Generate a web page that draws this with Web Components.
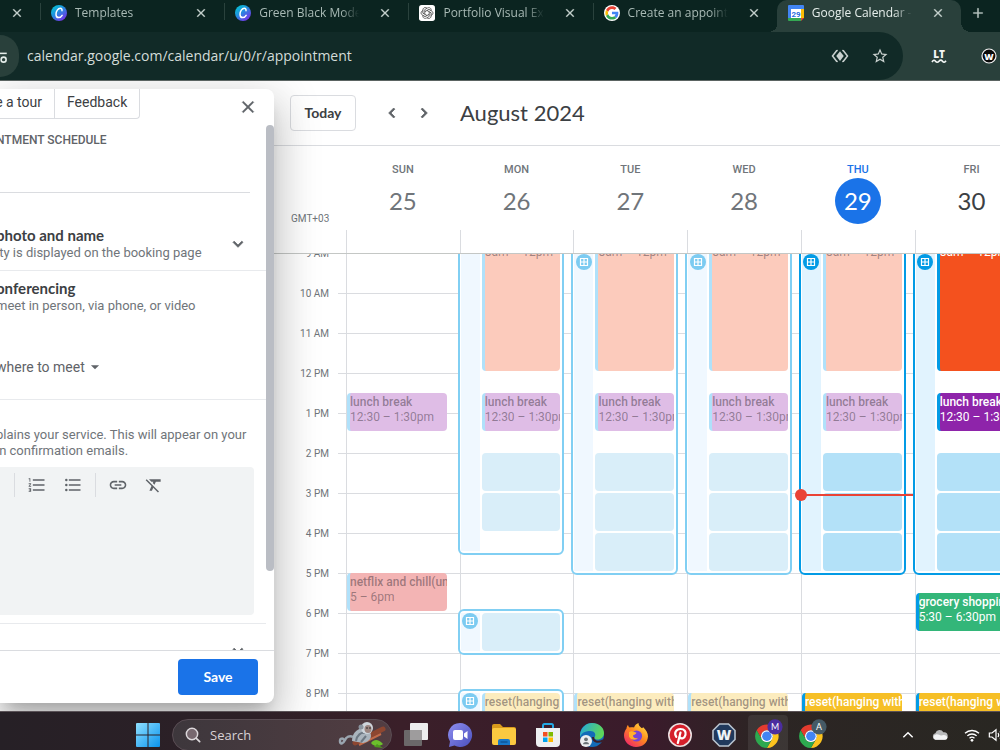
<!DOCTYPE html>
<html lang="en">
<head>
<meta charset="utf-8">
<meta name="viewport" content="width=device-width, initial-scale=1">
<title>Google Calendar - August 2024</title>
<style>
  html, body {
    height: 100%;
    margin: 0;
  }
  body {
    font-family: Roboto, "Liberation Sans", sans-serif;
    overflow: hidden;
    --google: Lato, "Open Sans", sans-serif;
    --system: "Open Sans", "Noto Sans", sans-serif;
    --line: #dadce0;
    --muted: #70757a;
    --ink: #3c4043;
  }
</style>
</head>
<body>
<desktop-screen>
  <browser-tabs slot="browser"></browser-tabs>
  <address-bar slot="browser"></address-bar>
  <booking-panel slot="page"></booking-panel>
  <calendar-view slot="page"></calendar-view>
  <task-bar slot="taskbar"></task-bar>
</desktop-screen>

<script>
// shared svg artwork, used by <svg-icon name="...">
const chromeArt = `
  <g transform="translate(0 4) scale(.92)">
    <path fill="#e33b2e" d="M24 13H43.05A22 22 0 0 0 4.950 13L14.470 29.500A11 11 0 0 1 24 13Z"/>
    <path fill="#fcc31e" transform="rotate(120 24 24)" d="M24 13H43.05A22 22 0 0 0 4.950 13L14.470 29.500A11 11 0 0 1 24 13Z"/>
    <path fill="#2da94f" transform="rotate(240 24 24)" d="M24 13H43.05A22 22 0 0 0 4.950 13L14.470 29.500A11 11 0 0 1 24 13Z"/>
    <circle cx="24" cy="24" r="11" fill="#fff"/>
    <circle cx="24" cy="24" r="8.800" fill="#4285f4"/>
  </g>`;

const canvaArt = `
  <defs><linearGradient id="g" x1="0" y1="0" x2=".8" y2="1">
    <stop offset="0" stop-color="#00d0cf"/><stop offset=".45" stop-color="#1f93e0"/><stop offset="1" stop-color="#7d2ae8"/>
  </linearGradient></defs>
  <circle cx="12" cy="12" r="12" fill="url(#g)"/>
  <path d="M16.500 8.500c.4-2.200-.8-3.500-2.400-3.500-3.600 0-6.600 4.500-6.600 8.700 0 3.200 1.600 5.200 4 5.200 2 0 3.900-1.300 5.200-3.500" fill="none" stroke="#fff" stroke-width="2.200" stroke-linecap="round"/>`;

const ICONS = {
  close: ["0 0 24 24", `<path d="M19 6.410L17.590 5 12 10.590 6.410 5 5 6.410 10.590 12 5 17.590 6.410 19 12 13.410 17.590 19 19 17.590 13.410 12z" stroke="currentColor" stroke-width=".5"/>`],
  plus: ["0 0 24 24", `<path d="M13 4h-2v7H4v2h7v7h2v-7h7v-2h-7z" stroke="currentColor" stroke-width=".5"/>`],
  left: ["0 0 24 24", `<path d="M15.410 7.410L14 6l-6 6 6 6 1.410-1.410L10.830 12z" stroke="currentColor" stroke-width=".9"/>`],
  right: ["0 0 24 24", `<path d="M10 6L8.590 7.410 13.170 12l-4.580 4.590L10 18l6-6z" stroke="currentColor" stroke-width=".9"/>`],
  down: ["0 0 24 24", `<path d="M7.410 8.590L12 13.170l4.590-4.580L18 10l-6 6-6-6z" stroke="currentColor" stroke-width=".9"/>`],
  up: ["0 0 24 24", `<path d="M4 16l8-8 8 8" fill="none" stroke="currentColor" stroke-width="2.400"/>`],
  caret: ["0 0 24 24", `<path d="M5 9h14l-7 7z"/>`],
  numbered: ["0 0 24 24", `<path d="M2 17h2v.5H3v1h1v.5H2v1h3v-4H2v1zm1-9h1V4H2v1h1v3zm-1 3h1.800L2 13.100v.9h3v-1H3.200L5 10.900V10H2v1zm5-6v2h14V5H7zm0 14h14v-2H7v2zm0-6h14v-2H7v2z"/>`],
  bulleted: ["0 0 24 24", `<circle cx="4" cy="6" r="1.500"/><circle cx="4" cy="12" r="1.500"/><circle cx="4" cy="18" r="1.500"/><path d="M7 19h14v-2H7v2zm0-6h14v-2H7v2zm0-8v2h14V5H7z"/>`],
  link: ["0 0 24 24", `<path d="M3.900 12c0-1.710 1.390-3.100 3.100-3.100h4V7H7c-2.760 0-5 2.240-5 5s2.240 5 5 5h4v-1.900H7c-1.710 0-3.100-1.390-3.100-3.100zM8 13h8v-2H8v2zm9-6h-4v1.900h4c1.710 0 3.100 1.390 3.100 3.100s-1.390 3.100-3.100 3.100h-4V17h4c2.760 0 5-2.240 5-5s-2.240-5-5-5z"/>`],
  clear: ["0 0 24 24", `<path d="M3.270 5L2 6.270l6.970 6.970L6.500 19h3l1.570-3.660L16.730 21 18 19.730 3.550 5.270 3.270 5zM6 5v.18L8.820 8h2.400l-.72 1.680 2.100 2.100L14.210 8H20V5H6z"/>`],
  slots: ["0 0 16 16", `<circle cx="8" cy="8" r="8"/><path d="M4.500 4.500h7v7h-7zM8 4.500v7M4.500 8h7" fill="none" stroke="#fff" stroke-width="1.200"/>`],
  star: ["0 0 24 24", `<path d="M22 9.240l-7.190-.62L12 2 9.190 8.630 2 9.240l5.460 4.730L5.820 21 12 17.270 18.180 21l-1.630-7.030L22 9.240zM12 15.400l-3.760 2.270 1-4.280-3.320-2.880 4.380-.38L12 6.100l1.710 4.040 4.380.38-3.320 2.880 1 4.280L12 15.400z"/>`],
  tune: ["0 0 24 24", `<path d="M2 7h20" stroke="currentColor" stroke-width="2.500"/><circle cx="17" cy="17" r="4" fill="none" stroke="currentColor" stroke-width="2.500"/>`],
  lens: ["0 0 24 24", `<path d="M12 5.500l5 6.500-5 6.500L7 12z"/><path d="M9 4.500L7.500 5 2 12l5.500 7 1.500.5M15 4.500l1.500.5L22 12l-5.500 7-1.500.5" fill="none" stroke="currentColor" stroke-width="2"/>`],
  language: ["0 0 16 16", `<text x="8" y="9.500" font-family="Open Sans" font-size="10" font-weight="800" text-anchor="middle">LT</text><path d="M1 14q1.800-3 3.500-.8t3.500 0 3.500 0 3.500-.4" fill="none" stroke="currentColor" stroke-width="1.600"/>`],
  wappalyzer: ["0 0 16 16", `<circle cx="8" cy="8" r="7" fill="#0b0b0b" stroke="#f2f2f2" stroke-width="1.200"/><text x="8" y="11.500" fill="#fff" font-family="Open Sans" font-size="9" font-weight="800" text-anchor="middle">W</text>`],
  canva: ["0 0 24 24", canvaArt],
  openai: ["0 0 24 24", `<rect width="24" height="24" rx="4" fill="#fff"/><g transform="translate(-1.200 -1.200) scale(1.100)" fill="none" stroke="#4a4a4a" stroke-width="1.100">${[0, 60, 120, 180, 240, 300].map(a => `<path transform="rotate(${a} 12 12)" d="M9 13.700V7.300l3.800-2.200c2.900-1.500 5.600 1 4.700 3.700"/>`).join("")}</g>`],
  google: ["0 0 48 48", `<circle cx="24" cy="24" r="24" fill="#fff"/><g transform="translate(4 4) scale(.83)">
    <path fill="#ea4335" d="M24 9.500c3.540 0 6.710 1.220 9.210 3.600l6.850-6.850C35.900 2.380 30.470 0 24 0 14.620 0 6.510 5.380 2.560 13.220l7.980 6.190C12.430 13.720 17.740 9.500 24 9.500z"/>
    <path fill="#4285f4" d="M46.980 24.550c0-1.570-.15-3.090-.38-4.550H24v9.020h12.940c-.58 2.960-2.260 5.480-4.780 7.180l7.730 6c4.510-4.180 7.090-10.360 7.090-17.650z"/>
    <path fill="#fbbc05" d="M10.530 28.590c-.48-1.450-.76-2.990-.76-4.590s.27-3.140.76-4.590l-7.980-6.190C.92 16.460 0 20.120 0 24c0 3.880.92 7.540 2.560 10.780l7.970-6.190z"/>
    <path fill="#34a853" d="M24 48c6.480 0 11.930-2.130 15.890-5.810l-7.730-6c-2.150 1.450-4.920 2.300-8.160 2.300-6.260 0-11.570-4.220-13.470-9.910l-7.980 6.190C6.510 42.620 14.620 48 24 48z"/></g>`],
  calendar: ["0 0 16 16", `<path d="M1 0h14a1 1 0 0 1 1 1v3H0V1a1 1 0 0 1 1-1z" fill="#4285f4"/><path d="M0 3h3v10H0z" fill="#4285f4"/><path d="M13 4h3v9h-3z" fill="#fbbc04"/><path d="M0 13h13v3H1a1 1 0 0 1-1-1z" fill="#34a853"/><path d="M13 16v-3h3z" fill="#ea4335"/><path d="M3 4h10v9H3z" fill="#fff"/><text x="8" y="11.500" fill="#2a6fe0" font-family="Roboto" font-size="8" font-weight="700" text-anchor="middle">29</text>`],
  windows: ["0 0 24 24", `<defs><linearGradient id="g" x1="0" y1="0" x2="1" y2="1"><stop offset="0" stop-color="#8fe0ff"/><stop offset="1" stop-color="#0a93ee"/></linearGradient></defs><path fill="url(#g)" d="M0 1a1 1 0 0 1 1-1h10.500v11.500H0zM12.500 0H23a1 1 0 0 1 1 1v10.500H12.500zM0 12.500h11.500V24H1a1 1 0 0 1-1-1zM12.500 12.500H24V23a1 1 0 0 1-1 1H12.500z"/>`],
  search: ["0 0 24 24", `<circle cx="10.500" cy="10.500" r="8.500" fill="#77686f" stroke="#dcd8db" stroke-width="2.200"/><path d="M17 17l5 5" stroke="#dcd8db" stroke-width="2.600" stroke-linecap="round"/>`],
  marmoset: ["0 0 48 28", `
    <path d="M16 22L44 8" stroke="#8d4630" stroke-width="5" stroke-linecap="round"/><path d="M20 24l22-11" stroke="#c26a48" stroke-width="2"/>
    <path d="M14 16c-3-2-7 0-8 3-2 4-5 5-5 1 0-3 3-3 4-1" fill="none" stroke="#9aa5af" stroke-width="2.500"/>
    <path d="M13 20c0-7 4-12 11-13 5 0 8 4 8 8 0 3-3 6-8 7z" fill="#aab4bd"/>
    <path d="M17 20c1-6 5-9 9-8M22 21l5-6" fill="none" stroke="#6d7883" stroke-width="2"/>
    <circle cx="28" cy="7" r="6" fill="#cfd6dc"/><circle cx="22" cy="6" r="2.500" fill="#8a949e"/><ellipse cx="29" cy="8" rx="3.500" ry="4" fill="#9b8580"/>
    <circle cx="28" cy="7" r=".8" fill="#1c1c1c"/><circle cx="31" cy="7" r=".8" fill="#1c1c1c"/>
    <path d="M32 22c4-5 8-3 12 1-4 3-9 3-12-1z" fill="#6cbf2c"/><path d="M38 23l6 4-9-1z" fill="#4c9a1c"/>`],
  taskview: ["0 0 24 24", `<rect x="6" y="0" width="18" height="17" rx="1" fill="#ededee"/><rect x="0" y="7" width="18" height="16" rx="1" fill="#6b6869"/><path d="M6 7h12v10H6z" fill="#9e9c9d"/>`],
  chat: ["0 0 24 24", `<defs><linearGradient id="g" x1="0" y1="0" x2="1" y2="1"><stop offset="0" stop-color="#8f8ff0"/><stop offset="1" stop-color="#4a4fbd"/></linearGradient></defs><path fill="url(#g)" d="M12 0a12 12 0 1 1-5.500 22.600L1 24l1-5.500A12 12 0 0 1 12 0z"/><rect x="5" y="7" width="10" height="10" rx="2" fill="#fff"/><path d="M16 10.500l3.500-2.500v8L16 13.500z" fill="#fff"/>`],
  folder: ["0 0 24 24", `<path d="M0 3a2 2 0 0 1 2-2h6l3 3h11a2 2 0 0 1 2 2v4H0z" fill="#d99a1c"/><rect x="0" y="5" width="24" height="17" rx="2" fill="#fbc940"/><path d="M6 22v-4a2 2 0 0 1 2-2h8a2 2 0 0 1 2 2v4z" fill="#1877c9"/><path d="M8.500 19h7" stroke="#0e5599" stroke-width="1.500"/>`],
  store: ["0 0 24 24", `<path d="M7 6V2.500A1.500 1.500 0 0 1 8.500 1h7A1.500 1.500 0 0 1 17 2.500V6" fill="none" stroke="#23a8e4" stroke-width="2"/><path d="M0 5h24v15a4 4 0 0 1-4 4H4a4 4 0 0 1-4-4z" fill="#eef0f2"/><path d="M7 9h4.500v4.500H7z" fill="#f25022"/><path d="M12.500 9H17v4.500h-4.500z" fill="#7fba00"/><path d="M7 14.500h4.500V19H7z" fill="#00a4ef"/><path d="M12.500 14.500H17V19h-4.500z" fill="#ffb900"/>`],
  edge: ["0 0 24 24", `<defs><linearGradient id="g" x1="0" y1="0" x2="1" y2=".3"><stop offset="0" stop-color="#23a7e0"/><stop offset="1" stop-color="#5ed65a"/></linearGradient></defs>
    <circle cx="12" cy="12" r="12" fill="#136bb8"/><path d="M0 11.500C1 4.500 6 0 12 0c7 0 12 4.500 12 10 0 4-3 6.500-6.500 6.500-3 0-3.500-1.300-2.800-2.500 1.600-2.700 0-6-4.200-6C6 8 1.500 9.500 0 14z" fill="url(#g)"/><path d="M13 14c0 5 5 6 10 3.500L24 19" fill="none" stroke="#3a1f2b" stroke-width="2"/>
    <circle cx="6" cy="18" r="6" fill="#eceef0"/><circle cx="6" cy="16.300" r="1.900" fill="#6a7075"/><path d="M3 21.300c0-3 6-3 6 0z" fill="#6a7075"/>`],
  firefox: ["0 0 24 24", `<defs><linearGradient id="g" x1="1" y1="0" x2=".2" y2="1"><stop offset="0" stop-color="#fff14c"/><stop offset=".5" stop-color="#ff8a1e"/><stop offset="1" stop-color="#f0246a"/></linearGradient></defs>
    <path fill="url(#g)" d="M2.500 5.500c0-1.500.8-3 1.500-3.500.2 1 .8 2 1.500 2.600C7.500 4 9 4 10 4.500 11 2 12.500.8 14.500 0c0 2 1 3.500 3 5 1 .5 1.500-.5 1.500-1 3 3 5 6 5 9.500C23.500 20 18.500 24 12 24S0 19 0 12.500c0-3 1-5 2.500-7z"/>
    <circle cx="12.500" cy="13" r="5.600" fill="#7443d6"/><path d="M5 9c3-1.500 5 0 7.500.8-.4 1.800-2.500 1.800-3.500 2.800 0 2.500 3 3.500 5 2.200-1 2.700-7 3-9-1.300z" fill="#ffb02a"/>`],
  pinterest: ["0 0 24 24", `<circle cx="12" cy="12" r="11.200" fill="#d51f2b" stroke="#eadfe0" stroke-width="1.600"/><path d="M8.300 13.800c-2.600-3.600-.3-7.800 4.200-7.800 4 0 5.700 2.800 5 5.800-.8 3.500-4.300 4.700-5.700 2.300M12.500 9.500L9.800 20" fill="none" stroke="#fff" stroke-width="2.200" stroke-linecap="round"/>`],
  webwork: ["0 0 24 24", `<path d="M7.500 1h9L23 7.500v9L16.500 23h-9L1 16.500v-9z" fill="#21395c" stroke="#b9c4cf" stroke-width="1.600"/><text x="12" y="17" fill="#eef2f6" font-family="Open Sans" font-size="14" font-weight="800" text-anchor="middle">W</text>`],
  chromeM: ["0 0 48 48", `${chromeArt}<circle cx="36" cy="10" r="13" fill="#4b2d9f"/><text x="36" y="15" fill="#fff" font-family="Lato" font-size="15" text-anchor="middle">M</text>`],
  chromeA: ["0 0 48 48", `${chromeArt}<circle cx="36" cy="10" r="13" fill="#455a66"/><text x="36" y="15" fill="#fff" font-family="Lato" font-size="15" text-anchor="middle">A</text>`],
  cloud: ["0 0 24 24", `<path d="M6 19a5 5 0 0 1-1-9.800A6.500 6.500 0 0 1 17 8a5.500 5.500 0 0 1 2 11z" fill="#b9babb"/><path d="M5 19a4 4 0 0 1 1-7.800c3-1 6 2 8 1.500 4-2 9 0 9 3.300A3.200 3.200 0 0 1 20 19z" fill="#f3f4f5"/>`],
  wifi: ["0 0 24 24", `<g fill="none" stroke="currentColor" stroke-width="2"><path d="M1.500 9.500a15 15 0 0 1 21 0M5 13.300a10 10 0 0 1 14 0M8.300 16.800a5.500 5.500 0 0 1 7.400 0"/></g><circle cx="12" cy="20" r="2"/>`],
  volume: ["0 0 24 24", `<g fill="none" stroke="currentColor" stroke-width="1.800"><path d="M2 9h4l6-5v16l-6-5H2zM15 9q2 3 0 6M18 6.500q4 5.500 0 11"/></g>`]
};

class SvgIcon extends HTMLElement {
  connectedCallback() {
    if (this.shadowRoot) return;
    const [box, art] = ICONS[this.getAttribute("name")];
    this.attachShadow({ mode: "open" }).innerHTML = `
      <style>
        :host { display: inline-block; flex: none; width: var(--size, 20px); height: var(--size, 20px); }
        svg { display: block; width: 100%; height: 100%; overflow: visible; fill: currentColor; }
      </style>
      <svg viewBox="${box}" aria-hidden="true">${art}</svg>`;
  }
}
customElements.define("svg-icon", SvgIcon);

// every other element only needs its markup stamped once
function define(name, html) {
  const template = document.createElement("template");
  template.innerHTML = html;
  customElements.define(name, class extends HTMLElement {
    constructor() {
      super();
      this.attachShadow({ mode: "open" });
      this.shadowRoot.appendChild(template.content.cloneNode(true));
    }
  });
}

define("desktop-screen", `
<style>
  :host { display: flex; flex-direction: column; height: 100vh; background: #fff; }
  main { flex: 1; min-height: 0; display: flex; overflow: hidden; }
</style>
<slot name="browser"></slot>
<main><slot name="page"></slot></main>
<slot name="taskbar"></slot>
`);

define("browser-tab", `
<style>
  :host {
    display: flex;
    flex: 1;
    min-width: 0;
    box-sizing: border-box;
    height: 32px;
    padding: 4px 15px 10px 10px;
    align-items: center;
    gap: 8px;
    color: #a9bab5;
    font: 12px/18px var(--system);
    border-left: 1px solid transparent;
    border-image: linear-gradient(transparent 4px, #2a423d 4px, #2a423d 20px, transparent 20px) 1;
    --size: 16px;
  }
  :host([active]) {
    position: relative;
    background: #29403b;
    color: #e6eeeb;
    border-image: none;
    border-radius: 10px 10px 0 0;
  }
  /* feet of the selected tab */
  :host([active])::before, :host([active])::after {
    content: "";
    position: absolute;
    bottom: 0;
    width: 10px;
    height: 10px;
  }
  :host([active])::before { right: 100%; background: radial-gradient(circle at 0 0, transparent 10px, #29403b 10px); }
  :host([active])::after { left: 100%; background: radial-gradient(circle at 100% 0, transparent 10px, #29403b 10px); }
  span {
    flex: 1;
    min-width: 0;
    margin-right: 10px;
    overflow: hidden;
    white-space: nowrap;
    -webkit-mask-image: linear-gradient(90deg, #000 82%, transparent);
    mask-image: linear-gradient(90deg, #000 82%, transparent);
  }
  button { display: flex; padding: 0; border: 0; background: none; color: #c9d5d1; --size: 14px; width: 16px; justify-content: center; }
</style>
<slot name="icon"></slot>
<span><slot></slot></span>
<button aria-label="Close tab"><svg-icon name="close"></svg-icon></button>
`);

define("browser-tabs", `
<style>
  :host { display: flex; height: 32px; flex: none; background: #0b2420; }
  button {
    display: flex;
    flex: none;
    align-items: center;
    justify-content: center;
    box-sizing: border-box;
    height: 26px;
    padding: 0;
    border: 0;
    background: none;
    color: #c9d5d1;
  }
  .cut { width: 40px; padding-right: 6px; --size: 14px; }
  .new { width: 39px; padding-right: 6px; --size: 14px; }
</style>
<button class="cut" aria-label="Close tab"><svg-icon name="close"></svg-icon></button>
<browser-tab><svg-icon slot="icon" name="canva"></svg-icon>Templates</browser-tab>
<browser-tab><svg-icon slot="icon" name="canva"></svg-icon>Green Black Modern</browser-tab>
<browser-tab><svg-icon slot="icon" name="openai"></svg-icon>Portfolio Visual Expl</browser-tab>
<browser-tab><svg-icon slot="icon" name="google"></svg-icon>Create an appointment</browser-tab>
<browser-tab active><svg-icon slot="icon" name="calendar"></svg-icon>Google Calendar -</browser-tab>
<button class="new" aria-label="New tab"><svg-icon name="plus"></svg-icon></button>
`);

define("address-bar", `
<style>
  :host { display: flex; flex: none; height: 48px; background: #29403b; border-bottom: 1px solid #5b6462; overflow: hidden; }
  .field { flex: 1; display: flex; align-items: center; background: #112a27; border-radius: 0 24px 24px 0; padding-right: 3px; }
  button { display: flex; flex: none; align-items: center; justify-content: center; width: 40px; height: 40px; padding: 0; border: 0; background: none; color: #c9d1cf; --size: 18px; }
  .site { width: 19px; height: 42px; justify-content: flex-end; padding-right: 11px; background: #29403b; border-radius: 0 21px 21px 0; color: #e6eeeb; --size: 15px; }
  input { flex: 1; min-width: 0; margin: 0; padding: 0 8px; border: 0; outline: 0; background: none; color: #d3dcd9; font: 14px/20px var(--system); }
  nav { flex: none; display: flex; width: 97px; align-items: center; padding-left: 16px; box-sizing: border-box; gap: 10px; }
  nav button { color: #f3f6f5; --size: 16px; }
</style>
<div class="field">
  <button class="site" aria-label="Site information"><svg-icon name="tune"></svg-icon></button>
  <input type="text" aria-label="Address" value="calendar.google.com/calendar/u/0/r/appointment">
  <button aria-label="Lens"><svg-icon name="lens"></svg-icon></button>
  <button aria-label="Bookmark"><svg-icon name="star"></svg-icon></button>
</div>
<nav>
  <button aria-label="LanguageTool"><svg-icon name="language"></svg-icon></button>
  <button aria-label="Extension"><svg-icon name="wappalyzer"></svg-icon></button>
</nav>
`);

define("panel-section", `
<style>
  :host { display: flex; align-items: center; padding: 8px 18px 8px 0; border-bottom: 1px solid #e8eaed; }
  div { flex: 1; min-width: 0; }
  h3 { margin: 0; font: 700 15px/18px var(--google); color: var(--ink); white-space: nowrap; }
  p { margin: 0; font-size: 13px; line-height: 18px; color: var(--muted); white-space: nowrap; }
</style>
<div>
  <h3><slot name="title"></slot></h3>
  <p><slot name="hint"></slot></p>
  <slot></slot>
</div>
<slot name="action"></slot>
`);

define("booking-panel", `
<style>
  :host {
    position: relative;
    z-index: 2;
    display: flex;
    flex-direction: column;
    flex: none;
    width: 274px;
    margin: 8px 0;
    background: #fff;
    border-radius: 0 8px 8px 0;
    box-shadow: 0 24px 38px 3px rgba(0,0,0,.14), 0 9px 46px 8px rgba(0,0,0,.12), 0 11px 15px -7px rgba(0,0,0,.2);
    color: var(--muted);
  }
  button { font: inherit; color: #5f6368; background: none; border: 0; padding: 0; }
  .icon { display: flex; align-items: center; justify-content: center; width: 36px; height: 36px; }
  header { display: flex; height: 36px; justify-content: space-between; padding-right: 8px; }
  .links { display: flex; height: 30px; box-sizing: border-box; border: 1px solid var(--line); border-width: 0 1px 1px 0; border-radius: 0 0 4px 0; }
  .links button { padding: 0 12px 4px; font-size: 14px; color: var(--ink); white-space: nowrap; }
  .links button:first-child { padding-left: 0; width: 55px; box-sizing: border-box; border-right: 1px solid var(--line); text-align: right; display: flex; justify-content: flex-end; align-items: center; }
  .scroll { flex: 1; min-height: 0; display: flex; overflow: hidden; }
  .content { flex: 1; min-width: 0; margin-left: -4px; }
  .thumb { flex: none; width: 8px; height: 85%; border-radius: 4px; background: #babdc4; }
  .heading { display: block; padding-top: 7px; font-size: 12px; line-height: 16px; font-weight: 500; color: #5f6368; }
  .name { display: block; box-sizing: border-box; width: calc(100% - 16px); height: 45px; padding: 0; border: 0; border-bottom: 1px solid var(--line); background: none; outline: 0; }
  .photo { padding-top: 33px; }
  .photo .icon { width: 20px; }
  .where { display: flex; align-items: center; height: 48px; padding-top: 28px; }
  select { appearance: none; border: 0; padding: 0; margin: 0 3px 0 0; background: none; font: 14px/20px Roboto, sans-serif; color: #5f6368; outline: 0; }
  .where svg-icon { --size: 14px; color: #5f6368; }
  .about { padding: 27px 12px 8px 0; border-bottom: 1px solid #e8eaed; }
  .about label { display: block; font-size: 13px; line-height: 16px; margin-bottom: 8px; white-space: nowrap; }
  .editor { height: 148px; display: flex; flex-direction: column; background: #f1f3f4; border-radius: 4px; }
  .tools { display: flex; align-items: center; height: 36px; padding-left: 18px; }
  .tools button { display: flex; justify-content: center; width: 36px; }
  .tools i { width: 1px; height: 24px; margin-right: 4px; background: var(--line); }
  .tools button + i { margin: 0 4px; }
  textarea { flex: 1; border: 0; padding: 8px; margin: 0; background: none; resize: none; outline: 0; font: 14px/20px Roboto, sans-serif; }
  .more { display: flex; justify-content: flex-end; padding: 9px 18px 0 0; }
  .more .icon { width: 20px; }
  footer { display: flex; justify-content: flex-end; padding: 8px 16px; border-top: 1px solid var(--line); }
  .save { width: 80px; height: 36px; border-radius: 4px; background: #1a73e8; color: #fff; font: 700 14px/20px var(--google); }
</style>
<header>
  <div class="links">
    <button>e a tour</button>
    <button>Feedback</button>
  </div>
  <button class="icon" aria-label="Close"><svg-icon name="close"></svg-icon></button>
</header>
<div class="scroll">
  <div class="content">
    <label class="heading" for="name">NTMENT SCHEDULE</label>
    <input class="name" id="name" type="text">
    <panel-section class="photo">
      <span slot="title">photo and name</span>
      <span slot="hint">ity is displayed on the booking page</span>
      <button class="icon" slot="action" aria-label="Expand"><svg-icon name="down"></svg-icon></button>
    </panel-section>
    <panel-section>
      <span slot="title">onferencing</span>
      <span slot="hint">meet in person, via phone, or video</span>
      <div class="where">
        <select aria-label="Location"><option>where to meet</option></select>
        <svg-icon name="caret"></svg-icon>
      </div>
    </panel-section>
    <div class="about">
      <label for="about">plains your service. This will appear on your<br>in confirmation emails.</label>
      <div class="editor">
        <div class="tools">
          <i></i>
          <button aria-label="Numbered list"><svg-icon name="numbered"></svg-icon></button>
          <button aria-label="Bulleted list"><svg-icon name="bulleted"></svg-icon></button>
          <i></i>
          <button aria-label="Insert link"><svg-icon name="link"></svg-icon></button>
          <button aria-label="Remove formatting"><svg-icon name="clear"></svg-icon></button>
        </div>
        <textarea id="about"></textarea>
      </div>
    </div>
    <div class="more"><button class="icon" aria-label="Expand"><svg-icon name="down"></svg-icon></button></div>
  </div>
  <div class="thumb"></div>
</div>
<footer><button class="save">Save</button></footer>
`);

define("day-heading", `
<style>
  :host { display: flex; flex-direction: column; align-items: center; height: 107px; box-sizing: border-box; padding-top: 15px; color: var(--muted); }
  .day { font-size: 11px; line-height: 17px; font-weight: 500; }
  .date { display: flex; align-items: center; justify-content: center; width: 46px; height: 46px; border-radius: 50%; font: 24px/46px var(--google); }
  .tick { align-self: stretch; height: 23px; margin-top: auto; border-left: 1px solid var(--line); }
  :host([today]) .day { color: #1a73e8; }
  :host([today]) .date { background: #1a73e8; color: #fff; }
  :host([future]) .date { color: #3c4043; }
</style>
<span class="day"><slot name="day"></slot></span>
<span class="date"><slot></slot></span>
<span class="tick"></span>
`);

// places a child on the half-hour rows of its day
const FIRST_HOUR = 8;
function placeByTime(el) {
  const row = (hour) => (hour - FIRST_HOUR) * 2 + 1;
  el.style.gridRow = `${row(+el.getAttribute("from"))} / ${row(+el.getAttribute("to"))}`;
}

class CalendarEvent extends HTMLElement {
  connectedCallback() {
    placeByTime(this);
    if (this.shadowRoot) return;
    this.attachShadow({ mode: "open" }).innerHTML = `
      <style>
        :host {
          grid-column: 1 / -1;
          display: block;
          min-width: 0;
          box-sizing: border-box;
          margin-bottom: 2px;
          padding: 2px 0 0;
          border-left: 3px solid #b0e1fa;
          border-radius: 4px;
          overflow: hidden;
          white-space: nowrap;
          font-size: 12px;
          line-height: 15px;
          background: var(--fill);
          color: rgba(60,50,60,.48);
        }
        :host([narrow]) { grid-column: 2; }
        :host([solid]) { border-left-color: #039be5; color: #fff; }
        :host([wrapped]) { padding-top: 32px; }
        b { display: block; font-weight: 500; }
      </style>
      <b><slot></slot></b><slot name="time"></slot>`;
  }
}
customElements.define("calendar-event", CalendarEvent);

class BookingSlot extends HTMLElement {
  connectedCallback() {
    placeByTime(this);
    if (this.shadowRoot) return;
    this.attachShadow({ mode: "open" }).innerHTML = `
      <style>
        :host { grid-column: 2; margin-bottom: 2px; border-radius: 4px; background: #d9eef9; }
        :host([solid]) { background: #b3e1f8; }
      </style>`;
  }
}
customElements.define("booking-slot", BookingSlot);

class BookingWindow extends HTMLElement {
  connectedCallback() {
    placeByTime(this);
    if (this.shadowRoot) return;
    this.attachShadow({ mode: "open" }).innerHTML = `
      <style>
        :host {
          grid-column: 1 / -1;
          box-sizing: border-box;
          display: flex;
          margin: -4px -4px -2px -3px;
          padding: 2px 1px;
          border: 2px solid #81cff3;
          border-radius: 6px;
          background: #fff;
          color: #7ccbf1;
        }
        :host([solid]) { border-color: #039be5; color: #039be5; }
        div { width: 19px; background: #f0f8ff; display: flex; justify-content: center; }
        :host([solid]) div { background: #e1f3fe; }
        svg-icon { --size: 16px; }
        :host([scrolled]) svg-icon { margin-top: 41px; }
        :host([bare]) svg-icon { display: none; }
      </style>
      <div><svg-icon name="slots"></svg-icon></div>`;
  }
}
customElements.define("booking-window", BookingWindow);

define("day-column", `
<style>
  :host {
    position: relative;
    display: grid;
    grid-template-columns: 21px minmax(0, 1fr);
    grid-template-rows: repeat(26, 20px);
    padding-right: 13px;
    border-left: 1px solid var(--line);
  }
</style>
<slot></slot>
`);

define("now-line", `
<style>
  :host { position: absolute; left: 0; right: 0; top: 281px; height: 2px; background: #ea4335; }
  :host::before { content: ""; position: absolute; left: -7px; top: -5px; width: 12px; height: 12px; border-radius: 50%; background: #ea4335; }
</style>
`);

const WORK = { title: "", time: "8am – 12pm", from: 8, to: 12, fill: "#fccbbc", attrs: "narrow wrapped" };
const LUNCH = { title: "lunch break", time: "12:30 – 1:30pm", from: 12.5, to: 13.5, fill: "#dfbde6", attrs: "narrow" };
const RESET = { title: "reset(hanging with", time: "", from: 20, to: 21, fill: "#fcecbe", attrs: "" };

const DAYS = [
  { day: "SUN", date: 25, events: [
    { ...LUNCH, attrs: "" },
    { title: "netflix and chill(unw", time: "5 – 6pm", from: 17, to: 18, fill: "#f3b4b4", attrs: "" }
  ] },
  { day: "MON", date: 26, windows: [[8, 16.5, "bare"], [18, 19, ""], [20, 21, ""]], slots: [14, 15, 18],
    events: [WORK, LUNCH, { ...RESET, attrs: "narrow" }] },
  { day: "TUE", date: 27, windows: [[8, 17, "scrolled"]], slots: [14, 15, 16], events: [WORK, LUNCH, RESET] },
  { day: "WED", date: 28, windows: [[8, 17, "scrolled"]], slots: [14, 15, 16], events: [WORK, LUNCH, RESET] },
  { day: "THU", date: 29, state: "today", now: true, windows: [[8, 17, "scrolled solid"]], slots: [14, 15, 16],
    events: [WORK, LUNCH, { ...RESET, fill: "#f6bf26", attrs: "solid" }] },
  { day: "FRI", date: 30, state: "future", windows: [[8, 17, "scrolled solid"]], slots: [14, 15, 16], events: [
    { ...WORK, fill: "#f4511e", attrs: "narrow wrapped solid" },
    { ...LUNCH, fill: "#8e24aa", attrs: "narrow solid" },
    { title: "grocery shopping", time: "5:30 – 6:30pm", from: 17.5, to: 18.5, fill: "#33b679", attrs: "solid" },
    { ...RESET, fill: "#f6bf26", attrs: "solid" }
  ] }
];
const HOURS = ["9 AM", "10 AM", "11 AM", "12 PM", "1 PM", "2 PM", "3 PM", "4 PM", "5 PM", "6 PM", "7 PM", "8 PM"];

class CalendarView extends HTMLElement {
  constructor() {
    super();
    this.attachShadow({ mode: "open" });
  }

  connectedCallback() {
    this._render();
  }

  _dayBody(d) {
    const solid = d.state ? "solid" : "";
    const windows = (d.windows || []).map(([from, to, attrs]) =>
      `<booking-window from="${from}" to="${to}" ${attrs}></booking-window>`);
    const slots = (d.slots || []).map((hour) =>
      `<booking-slot from="${hour}" to="${hour + 1}" ${solid}></booking-slot>`);
    const events = d.events.map((e) =>
      `<calendar-event from="${e.from}" to="${e.to}" style="--fill:${e.fill}" ${e.attrs}>${e.title}<span slot="time">${e.time}</span></calendar-event>`);
    return `<day-column>${windows.join("")}${slots.join("")}${events.join("")}${d.now ? "<now-line></now-line>" : ""}</day-column>`;
  }

  _render() {
    this.shadowRoot.innerHTML = `
      <style>
        :host { flex: 1; min-width: 0; display: flex; flex-direction: column; overflow: hidden; color: var(--muted); }
        .bar { display: flex; flex: none; align-items: center; height: 64px; padding-left: 16px; gap: 20px; border-bottom: 1px solid var(--line); }
        button { padding: 0; border: 0; background: none; color: #5f6368; }
        .today { width: 66px; height: 36px; box-sizing: border-box; border: 1px solid var(--line); border-radius: 4px; font: 700 14px/20px var(--google); color: var(--ink); }
        .arrows { display: flex; }
        .arrows button { display: flex; align-items: center; justify-content: center; width: 32px; height: 32px; }
        h1 { margin: 0; font: 400 22px/28px var(--google); color: var(--ink); }
        .days { display: grid; grid-template-columns: 72px repeat(6, calc((100% - 72px) * 4 / 23)); }
        .head { flex: none; border-bottom: 1px solid #c4c7c5; }
        .zone { align-self: end; padding: 0 0 28px 17px; font-size: 10px; line-height: 12px; }
        .body { flex: 1; min-height: 0; overflow: hidden; }
        .grid { margin-top: -41px; }
        .hours { display: flex; flex-direction: column; padding-top: 21px; }
        .hours div { display: flex; height: 40px; align-items: center; justify-content: flex-end; gap: 9px; font-size: 10px; line-height: 12px; }
        .hours div::after { content: ""; width: 8px; height: 1px; margin-bottom: 1px; background: var(--line); }
        .columns {
          grid-column: 2 / -1;
          display: grid;
          grid-template-columns: subgrid;
          background: repeating-linear-gradient(var(--line) 0 1px, transparent 1px 40px);
        }
      </style>
      <div class="bar">
        <button class="today">Today</button>
        <div class="arrows">
          <button aria-label="Previous week"><svg-icon name="left"></svg-icon></button>
          <button aria-label="Next week"><svg-icon name="right"></svg-icon></button>
        </div>
        <h1>August 2024</h1>
      </div>
      <div class="days head">
        <span class="zone">GMT+03</span>
        ${DAYS.map((d) => `<day-heading ${d.state || ""}><span slot="day">${d.day}</span>${d.date}</day-heading>`).join("")}
      </div>
      <div class="body">
        <div class="days grid">
          <div class="hours">${HOURS.map((h) => `<div>${h}</div>`).join("")}</div>
          <div class="columns">${DAYS.map((d) => this._dayBody(d)).join("")}</div>
        </div>
      </div>`;
  }
}
customElements.define("calendar-view", CalendarView);

define("task-bar", `
<style>
  :host {
    position: relative;
    z-index: 3;
    display: block;
    flex: none;
    height: 38px;
    overflow: hidden;
    border-top: 1px solid #5a5257;
    background: linear-gradient(90deg, #262026 0, #2d2027 25%, #3a1f29 40%, #3a1b2b 65%, #2c2524 76%, #292722 100%);
    color: #fff;
  }
  .row { display: flex; align-items: center; gap: 4px; height: 46px; padding-left: 128px; }
  button { display: flex; flex: none; align-items: center; justify-content: center; width: 40px; height: 40px; padding: 0; border: 0; border-radius: 4px; background: none; color: inherit; --size: 24px; }
  .big { --size: 28px; }
  .open { background: rgba(255,255,255,.08); }
  label { display: flex; flex: 0 1 220px; min-width: 0; align-items: center; box-sizing: border-box; height: 32px; padding: 0 4px 0 12px; gap: 9px; border: 1px solid #5a4d54; border-radius: 16px; background: linear-gradient(90deg, #3d373c, #523d42); --size: 16px; }
  input { flex: 1; min-width: 0; padding: 0; border: 0; outline: 0; background: none; color: #e4dfe2; font: 13px/20px var(--system); }
  input::placeholder { color: #d8d2d5; opacity: 1; }
  .art { --size: 48px; }
  .tray { display: flex; width: 108px; margin-left: auto; }
  .tray button { width: 32px; --size: 16px; }
  .tray button:last-child { width: 12px; justify-content: flex-start; }
  .tray .up { --size: 14px; }
</style>
<div class="row">
  <button aria-label="Start"><svg-icon name="windows"></svg-icon></button>
  <label><svg-icon name="search"></svg-icon><input type="search" placeholder="Search" aria-label="Search"><svg-icon class="art" name="marmoset"></svg-icon></label>
  <button aria-label="Task view"><svg-icon name="taskview"></svg-icon></button>
  <button aria-label="Chat"><svg-icon name="chat"></svg-icon></button>
  <button aria-label="File Explorer"><svg-icon name="folder"></svg-icon></button>
  <button aria-label="Store"><svg-icon name="store"></svg-icon></button>
  <button aria-label="Edge"><svg-icon name="edge"></svg-icon></button>
  <button aria-label="Firefox"><svg-icon name="firefox"></svg-icon></button>
  <button aria-label="Pinterest"><svg-icon name="pinterest"></svg-icon></button>
  <button aria-label="WebWork"><svg-icon name="webwork"></svg-icon></button>
  <button class="big open" aria-label="Chrome, profile M"><svg-icon name="chromeM"></svg-icon></button>
  <button class="big" aria-label="Chrome, profile A"><svg-icon name="chromeA"></svg-icon></button>
  <div class="tray">
    <button class="up" aria-label="Hidden icons"><svg-icon name="up"></svg-icon></button>
    <button aria-label="OneDrive"><svg-icon name="cloud"></svg-icon></button>
    <button aria-label="Network"><svg-icon name="wifi"></svg-icon></button>
    <button aria-label="Volume"><svg-icon name="volume"></svg-icon></button>
  </div>
</div>
`);
</script>
</body>
</html>
